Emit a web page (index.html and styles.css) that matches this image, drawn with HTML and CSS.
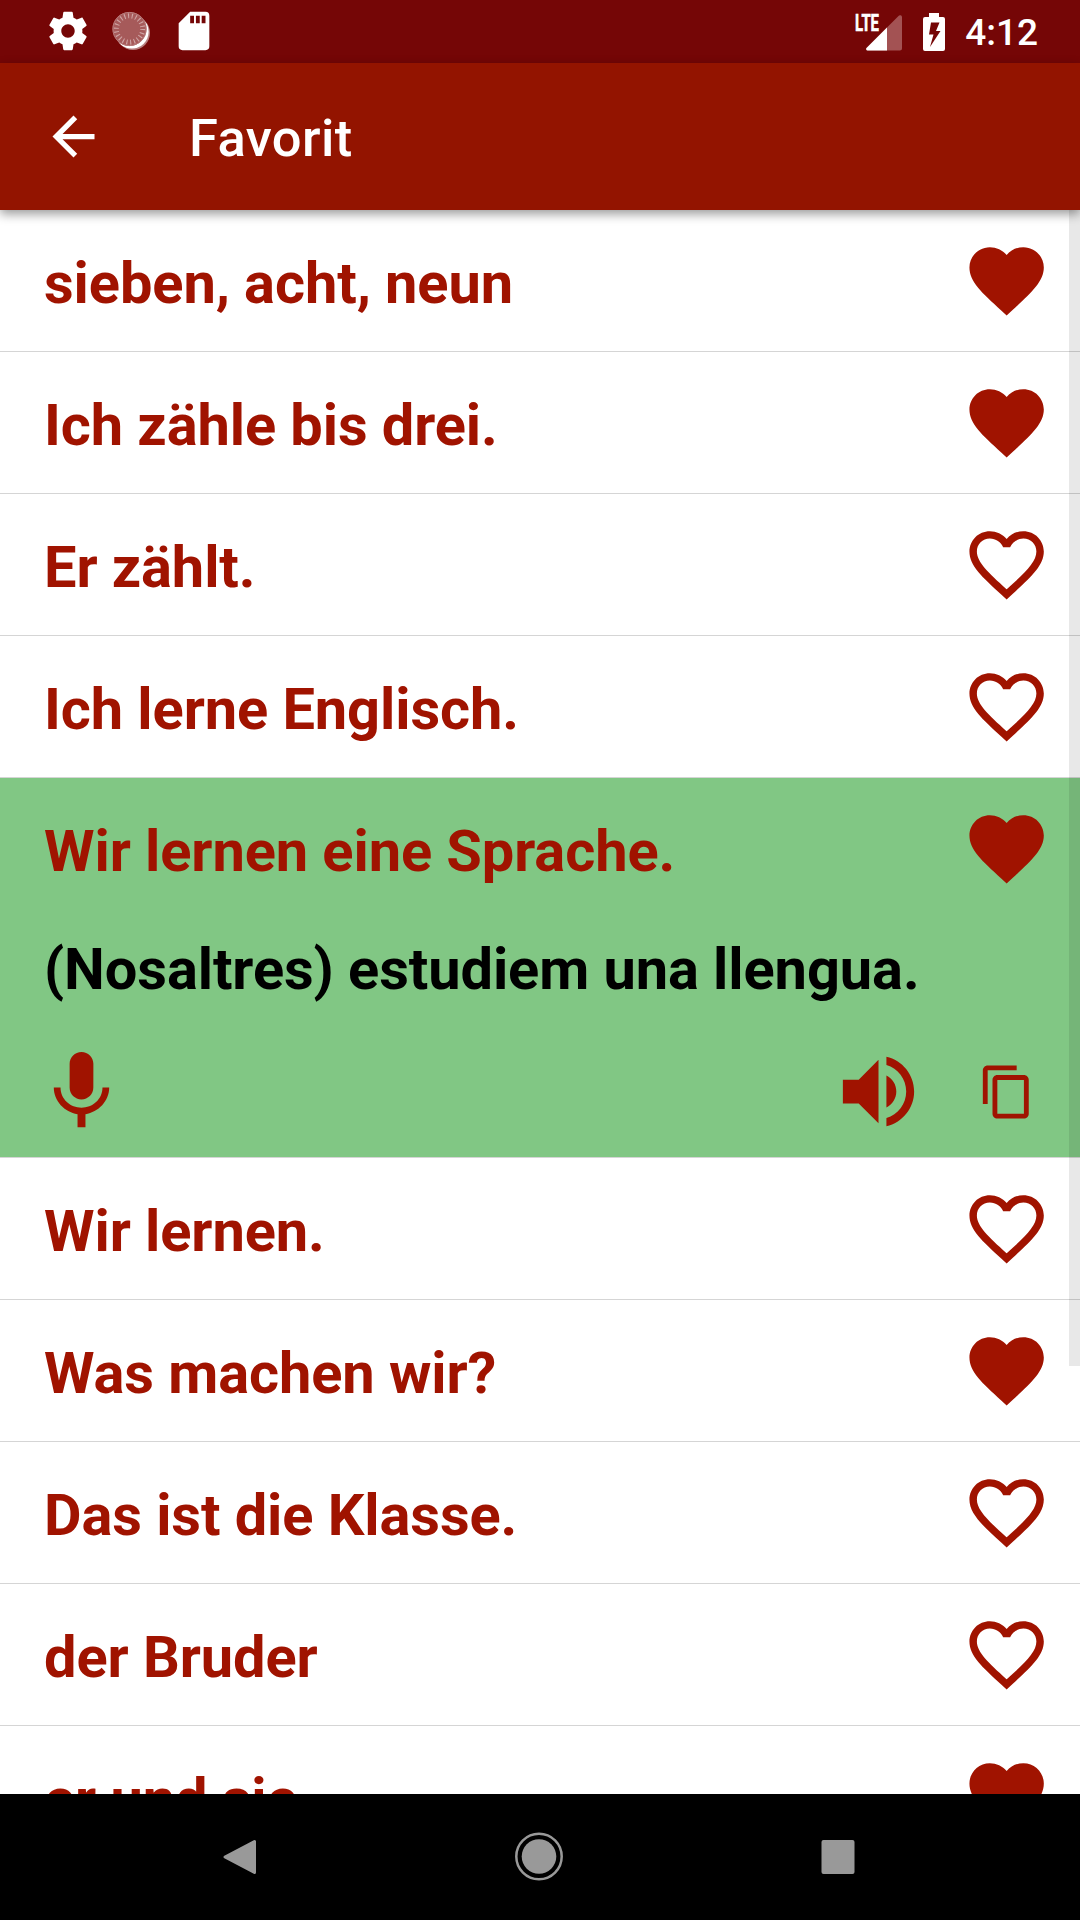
FILE: index.html
```html
<!DOCTYPE html>
<html lang="de">
<head>
<meta charset="utf-8">
<title>Favorit</title>
<link rel="stylesheet" href="styles.css">
</head>
<body>
<svg class="sprite" aria-hidden="true">
  <symbol id="heart" viewBox="0 0 24 24"><path d="M12 21.35l-1.45-1.32C5.4 15.36 2 12.28 2 8.5 2 5.42 4.42 3 7.5 3c1.74 0 3.41.81 4.5 2.09C13.09 3.81 14.76 3 16.5 3 19.58 3 22 5.42 22 8.5c0 3.78-3.4 6.86-8.55 11.54L12 21.35z"/></symbol>
  <symbol id="heart-outline" viewBox="0 0 24 24"><path d="M16.5 3c-1.74 0-3.41.81-4.5 2.09C10.91 3.81 9.24 3 7.5 3 4.42 3 2 5.42 2 8.5c0 3.78 3.4 6.86 8.55 11.54L12 21.35l1.45-1.32C18.6 15.36 22 12.28 22 8.5 22 5.42 19.58 3 16.5 3zm-4.4 15.55l-.1.1-.1-.1C7.14 14.24 4 11.39 4 8.5 4 6.5 5.5 5 7.5 5c1.54 0 3.04.99 3.57 2.36h1.87C13.46 5.99 14.96 5 16.5 5c2 0 3.5 1.5 3.5 3.5 0 2.89-3.14 5.74-7.9 10.05z"/></symbol>
</svg>
<div class="screen">
  <header class="status">
    <div class="notifications">
      <svg class="note" viewBox="0 0 24 24"><path d="M19.43 12.98c.04-.32.07-.64.07-.98s-.03-.66-.07-.98l2.11-1.65c.19-.15.24-.42.12-.64l-2-3.46c-.12-.22-.39-.3-.61-.22l-2.49 1c-.52-.4-1.08-.73-1.69-.98l-.38-2.65C14.46 2.18 14.25 2 14 2h-4c-.25 0-.46.18-.49.42l-.38 2.65c-.61.25-1.17.59-1.69.98l-2.49-1c-.23-.09-.49 0-.61.22l-2 3.46c-.13.22-.07.49.12.64l2.11 1.65c-.04.32-.07.65-.07.98s.03.66.07.98l-2.11 1.65c-.19.15-.24.42-.12.64l2 3.46c.12.22.39.3.61.22l2.49-1c.52.4 1.08.73 1.69.98l.38 2.65c.03.24.24.42.49.42h4c.25 0 .46-.18.49-.42l.38-2.65c.61-.25 1.17-.59 1.69-.98l2.49 1c.23.09.49 0 .61-.22l2-3.46c.12-.22.07-.49-.12-.64l-2.11-1.65zM12 15.5c-1.93 0-3.5-1.57-3.5-3.5s1.57-3.5 3.5-3.5 3.5 1.57 3.5 3.5-1.57 3.5-3.5 3.5z"/></svg>
      <svg class="note" viewBox="0 0 46 46">
        <circle cx="25" cy="25" r="17" fill="#b88080"/>
        <circle cx="23.800" cy="23.800" r="16.800" fill="#fff"/>
        <circle cx="21.500" cy="21" r="17" fill="#a65a5a"/>
        <circle cx="21.500" cy="21" r="13.200" fill="none" stroke="#cfa5a5" stroke-width="5" stroke-dasharray="1.100 2.670"/>
        <circle cx="21.500" cy="21" r="16.600" fill="none" stroke="#b87a7a" stroke-width="1"/>
      </svg>
      <svg class="note" viewBox="0 0 24 24"><path d="M18 2h-8L4 8v12a2 2 0 0 0 2 2h12a2 2 0 0 0 2-2V4a2 2 0 0 0-2-2zM12 8h-2V4h2v4zm3 0h-2V4h2v4zm3 0h-2V4h2v4z"/></svg>
    </div>
    <div class="system">
      <svg class="signal" viewBox="0 0 48 40">
        <path d="M13.500 38.500a1.500 1.500 0 0 1-1-2.500L44.500 4a2 2 0 0 1 3.500 1v31.500a2 2 0 0 1-2 2z" fill="#a35253"/>
        <path d="M33 15.500v23H13.500a1.500 1.500 0 0 1-1-2.500z"/>
        <text x="1" y="18.500" textLength="24" lengthAdjust="spacingAndGlyphs">LTE</text>
      </svg>
      <svg class="battery" viewBox="0 0 22 38"><path fill-rule="evenodd" d="M6 0h10v4h4a2 2 0 0 1 2 2v30a2 2 0 0 1-2 2H2a2 2 0 0 1-2-2V6a2 2 0 0 1 2-2h4zM8 9.500L6 21.500h4.500L7 34l10.500-16H13l3.500-8.500z"/></svg>
      <span class="clock">4:12</span>
    </div>
  </header>
  <div class="appbar">
    <svg class="back" viewBox="0 0 24 24"><path d="M20 11H7.830l5.590-5.590L12 4l-8 8 8 8 1.410-1.410L7.830 13H20v-2z"/></svg>
    <h1>Favorit</h1>
  </div>
  <main class="list">
    <div class="item"><div class="row"><span>sieben, acht, neun</span><svg class="heart"><use href="#heart"/></svg></div></div>
    <div class="item"><div class="row"><span>Ich zähle bis drei.</span><svg class="heart"><use href="#heart"/></svg></div></div>
    <div class="item"><div class="row"><span>Er zählt.</span><svg class="heart"><use href="#heart-outline"/></svg></div></div>
    <div class="item"><div class="row"><span>Ich lerne Englisch.</span><svg class="heart"><use href="#heart-outline"/></svg></div></div>
    <div class="item open">
      <div class="row"><span>Wir lernen eine Sprache.</span><svg class="heart"><use href="#heart"/></svg></div>
      <p class="translation" lang="ca">(Nosaltres) estudiem una llengua.</p>
      <div class="actions">
        <svg class="mic" viewBox="0 0 24 24"><path d="M12 14c1.660 0 2.990-1.340 2.990-3L15 5c0-1.660-1.340-3-3-3S9 3.340 9 5v6c0 1.660 1.340 3 3 3zm5.300-3c0 3-2.540 5.100-5.300 5.100S6.700 14 6.700 11H5c0 3.410 2.720 6.230 6 6.720V21h2v-3.280c3.280-.48 6-3.300 6-6.720h-1.700z"/></svg>
        <svg class="speaker" viewBox="0 0 24 24"><path d="M3 9v6h4l5 5V4L7 9H3zm13.500 3c0-1.770-1.020-3.290-2.500-4.030v8.050c1.480-.73 2.500-2.250 2.500-4.020zM14 3.230v2.060c2.890.86 5 3.540 5 6.710s-2.110 5.850-5 6.710v2.060c4.010-.91 7-4.490 7-8.770s-2.990-7.860-7-8.770z"/></svg>
        <svg class="copy" viewBox="0 0 24 24"><path d="M16 1H4c-1.100 0-2 .9-2 2v14h2V3h12V1zm3 4H8c-1.100 0-2 .9-2 2v14c0 1.100.9 2 2 2h11c1.100 0 2-.9 2-2V7c0-1.100-.9-2-2-2zm0 16H8V7h11v14z"/></svg>
      </div>
    </div>
    <div class="item"><div class="row"><span>Wir lernen.</span><svg class="heart"><use href="#heart-outline"/></svg></div></div>
    <div class="item"><div class="row"><span>Was machen wir?</span><svg class="heart"><use href="#heart"/></svg></div></div>
    <div class="item"><div class="row"><span>Das ist die Klasse.</span><svg class="heart"><use href="#heart-outline"/></svg></div></div>
    <div class="item"><div class="row"><span>der Bruder</span><svg class="heart"><use href="#heart-outline"/></svg></div></div>
    <div class="item"><div class="row"><span>er und sie</span><svg class="heart"><use href="#heart"/></svg></div></div>
    <div class="scrollbar"></div>
  </main>
  <nav class="navbar">
    <svg viewBox="0 0 50 50"><path d="M39.500 9.500v31L10 25z" stroke="#999" stroke-width="3" stroke-linejoin="round"/></svg>
    <svg viewBox="0 0 50 50"><circle cx="25" cy="24.500" r="17.300"/><circle cx="25" cy="24.500" r="22.700" fill="none" stroke="#999" stroke-width="2.500"/></svg>
    <svg viewBox="0 0 50 50"><rect x="8.500" y="8" width="33" height="34" rx="2"/></svg>
  </nav>
</div>
</body>
</html>
```
FILE: styles.css
```css
* { box-sizing: border-box; }
body { margin: 0; font-family: Roboto, sans-serif; background: #fff; }
svg { display: block; flex: none; }
.sprite { display: none; }
.screen { width: 1080px; height: 1920px; display: flex; flex-direction: column; overflow: hidden; }

.status { flex: none; height: 63px; padding: 0 42px 0 45px; display: flex; align-items: center; justify-content: space-between; background: #750606; color: #fff; fill: #fff; }
.notifications { display: flex; gap: 17px; padding-bottom: 1px; }
.note { width: 46px; height: 46px; }
.system { display: flex; align-items: center; }
.signal { width: 48px; height: 40px; margin-right: 21px; overflow: visible; }
.signal text { font-family: Roboto, sans-serif; font-weight: 700; font-size: 23px; stroke: #fff; stroke-width: .6px; }
.battery { width: 22px; height: 38px; margin-right: 20px; }
.clock { font-weight: 500; font-size: 37px; line-height: 44px; padding-top: 3px; }

.appbar { position: relative; z-index: 1; flex: none; height: 147px; padding-left: 42px; display: flex; align-items: center; gap: 84px; background: #931400; color: #fff; fill: #fff; box-shadow: 0 4px 10px rgba(0, 0, 0, .4); }
.back { width: 63px; height: 63px; }
.appbar h1 { margin: 0; font-weight: 500; font-size: 52.5px; line-height: 62px; padding-top: 3px; letter-spacing: .4px; }

.list { position: relative; flex: 1; min-height: 0; overflow: hidden; color: #a01300; fill: #a01300; font-weight: 700; font-size: 57.75px; letter-spacing: -.08px; }
.item { border-bottom: 1px solid #d5d5d5; }
.row { height: 141px; padding: 0 29px 0 44px; display: flex; align-items: center; justify-content: space-between; line-height: 68px; }
.row span { padding-top: 4px; }
.heart { width: 89.25px; height: 89.25px; }
.open { height: 380px; background: #81c784; }
.translation { margin: 0; padding: 16px 44px 0; line-height: 68px; color: #000; }
.actions { display: flex; align-items: center; padding: 41px 44px 0 33.5px; }
.mic { width: 95px; height: 95px; margin-right: auto; }
.speaker { width: 95px; height: 95px; margin-right: 52px; }
.copy { width: 58px; height: 58px; }
.scrollbar { position: absolute; top: 0; right: 0; width: 11px; height: 1156px; background: rgba(0, 0, 0, .09); }

.navbar { flex: none; height: 126px; padding-right: 2px; display: flex; align-items: center; justify-content: center; gap: 249px; background: #000; fill: #999; }
.navbar svg { width: 50px; height: 50px; }
```
